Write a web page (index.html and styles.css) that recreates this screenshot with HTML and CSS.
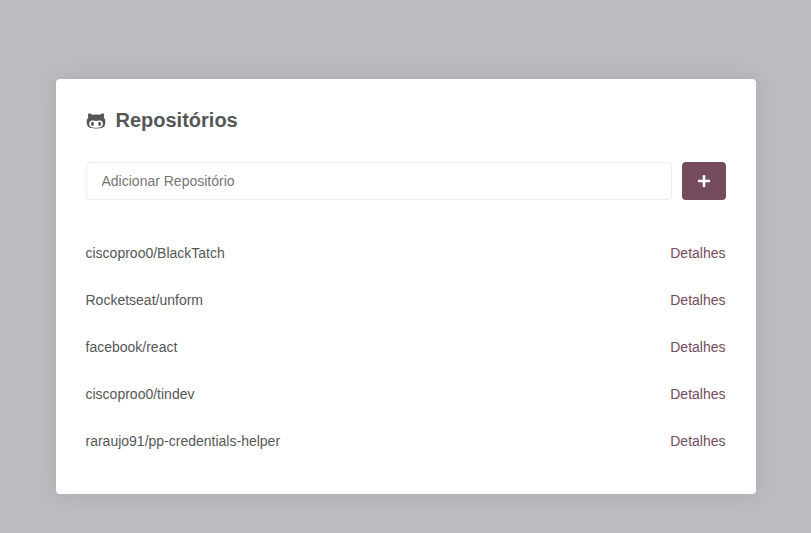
FILE: index.html
```html
<!DOCTYPE html>
<html lang="pt-BR">
<head>
<meta charset="utf-8">
<title>Repositórios</title>
<link rel="stylesheet" href="styles.css">
</head>
<body>
<main class="container">
  <h1 class="title">
    <svg class="logo" viewBox="0 0 480 512" fill="currentColor"><path d="M186.100 328.700c0 20.900-10.900 55.100-36.700 55.100s-36.700-34.200-36.700-55.100 10.900-55.100 36.700-55.100 36.700 34.200 36.700 55.100zM480 278.200c0 31.900-3.200 65.700-17.500 95-37.900 76.600-142.100 74.800-216.700 74.800-75.800 0-186.200 2.700-225.600-74.800-14.600-29-20.200-63.100-20.200-95 0-41.900 13.900-81.500 41.500-113.600-5.200-15.800-7.700-32.400-7.700-48.800 0-21.500 4.900-32.300 14.600-51.800 45.300 0 74.300 9 108.800 36 29-6.900 58.800-10 88.700-10 27 0 54.200 2.900 80.400 9.200 34-26.700 63-35.200 107.800-35.200 9.800 19.500 14.600 30.300 14.600 51.800 0 16.400-2.600 32.700-7.700 48.200 27.500 32.400 39 72.300 39 114.200zm-64.300 50.500c0-43.900-26.700-82.600-73.500-82.600-18.900 0-37 3.400-56 6-14.900 2.300-29.800 3.200-45.100 3.200-15.200 0-30.100-.9-45.100-3.200-18.700-2.600-37-6-56-6-46.800 0-73.500 38.700-73.500 82.600 0 87.800 80.400 101.300 150.400 101.300h48.200c70.300 0 150.600-13.400 150.600-101.300zm-82.600-55.100c-25.800 0-36.700 34.200-36.700 55.100s10.900 55.100 36.700 55.100 36.700-34.200 36.700-55.100-10.900-55.100-36.700-55.100z"/></svg>
    Repositórios
  </h1>
  <form class="form">
    <input class="field" type="text" placeholder="Adicionar Repositório">
    <button class="add" type="button" aria-label="Adicionar">
      <svg class="plus" viewBox="0 0 448 512" fill="currentColor"><path d="M416 208H272V64c0-17.670-14.330-32-32-32h-32c-17.670 0-32 14.330-32 32v144H32c-17.670 0-32 14.330-32 32v32c0 17.670 14.330 32 32 32h144v144c0 17.670 14.330 32 32 32h32c17.670 0 32-14.330 32-32V304h144c17.670 0 32-14.330 32-32v-32c0-17.670-14.330-32-32-32z"/></svg>
    </button>
  </form>
  <ul class="list">
    <li class="item"><span>ciscoproo0/BlackTatch</span><a class="link" href="#">Detalhes</a></li>
    <li class="item"><span>Rocketseat/unform</span><a class="link" href="#">Detalhes</a></li>
    <li class="item"><span>facebook/react</span><a class="link" href="#">Detalhes</a></li>
    <li class="item"><span>ciscoproo0/tindev</span><a class="link" href="#">Detalhes</a></li>
    <li class="item"><span>raraujo91/pp-credentials-helper</span><a class="link" href="#">Detalhes</a></li>
  </ul>
</main>
</body>
</html>
```
FILE: styles.css
```css
* { margin: 0; padding: 0; box-sizing: border-box; }

body {
  min-height: 100vh;
  padding-top: 79px;
  background: #bbbcc0;
  color: #555756;
  font: 14px "Liberation Sans", Arial, sans-serif;
}

.container {
  width: 700px;
  margin: 0 auto;
  padding: 30px 30px 29px;
  background: #fff;
  border-radius: 4px;
  box-shadow: 0 0 20px rgba(0, 0, 0, 0.1);
}

.title {
  display: flex;
  align-items: center;
  font-size: 20px;
  line-height: 23px;
}

.logo { width: 20px; height: 20px; margin-right: 10px; }

.form { display: flex; margin-top: 30px; }

.field {
  flex: 1;
  height: 38px;
  padding: 10px 15px;
  border: 1px solid #eee;
  border-radius: 4px;
  font: inherit;
}

.add {
  display: flex;
  align-items: center;
  justify-content: center;
  width: 44px;
  margin-left: 10px;
  border: 0;
  border-radius: 4px;
  background: #744c5d;
  color: #fff;
}

.plus { width: 14px; height: 14px; }

.list { margin-top: 30px; list-style: none; }

.item {
  display: flex;
  align-items: center;
  justify-content: space-between;
  padding: 15px 0;
  line-height: 17px;
}

.link { color: #744c5d; text-decoration: none; }
```
